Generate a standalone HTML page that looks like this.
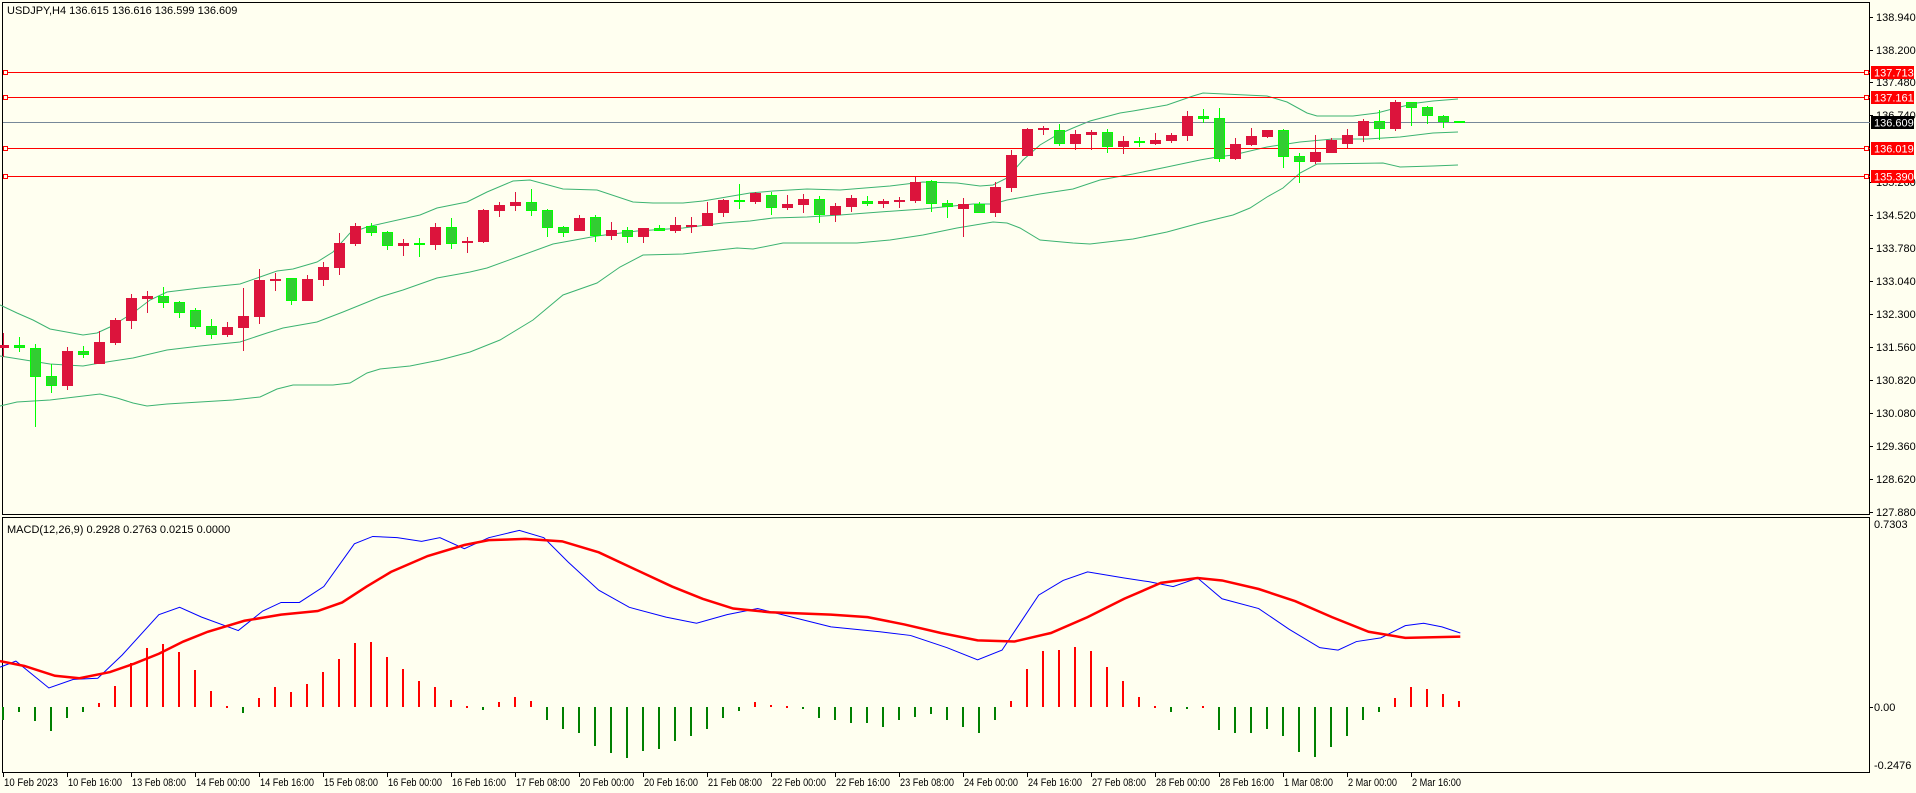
<!DOCTYPE html>
<html><head><meta charset="utf-8"><style>
html,body{margin:0;padding:0;background:#fffff0;}
svg{display:block;}
text{font-family:"Liberation Sans",sans-serif;font-size:11px;fill:#000;}
</style></head><body>
<svg id="s" width="1916" height="793" xmlns="http://www.w3.org/2000/svg" shape-rendering="crispEdges">
<rect width="1916" height="793" fill="#fffff0"/>
<rect x="2.5" y="2.5" width="1867" height="512" fill="none" stroke="#000"/>
<rect x="2.5" y="517.5" width="1867" height="255" fill="none" stroke="#000"/>
<text x="7" y="14">USDJPY,H4  136.615 136.616 136.599 136.609</text>
<text x="7" y="533">MACD(12,26,9) 0.2928 0.2763 0.0215 0.0000</text>
<g id="pax"></g>
<g fill="none" stroke="#3cb371" stroke-width="1" shape-rendering="auto">
<polyline points="0,305 17,313 33,320 50,329 83,335 97,333 110,327 133,313 150,300 167,292 200,288 240,284 260,277 277,271 293,269 317,262 333,252 350,233 367,227 380,224 420,215 437,208 467,202 487,192 513,181 530,180 563,189 597,190 633,202 653,203 683,203 703,201 750,193 773,191 807,189 840,190 890,186 923,182 957,183 980,186 993,185 1007,178 1023,160 1040,145 1057,135 1073,128 1090,121 1120,113 1133,111 1167,105 1193,96 1203,93 1267,96 1287,102 1307,113 1317,116 1353,116 1377,113 1400,107 1417,103 1433,101 1458,99"/>
<polyline points="0,356 50,364 83,366 100,363 133,358 167,350 200,346 240,342 267,333 283,328 317,322 343,312 380,297 403,290 437,278 470,272 487,268 520,256 553,244 597,236 637,231 683,228 723,223 750,221 773,218 807,217 840,215 880,212 923,209 973,204 993,204 1007,200 1040,194 1073,189 1100,180 1133,174 1167,167 1200,160 1217,157 1233,155 1267,147 1300,142 1333,139 1367,139 1400,137 1433,133 1458,132"/>
<polyline points="0,406 17,402 50,400 100,394 117,398 133,403 147,406 167,404 200,402 233,400 260,397 277,389 293,385 333,385 350,383 367,373 380,369 410,366 440,360 470,352 500,340 533,320 563,295 597,283 620,267 643,255 683,254 737,248 753,249 783,243 857,243 890,240 923,235 957,228 993,222 1007,223 1020,228 1040,240 1073,243 1090,244 1133,239 1167,232 1200,223 1233,215 1250,208 1267,197 1283,188 1300,173 1317,164 1383,163 1400,167 1433,166 1458,165"/>
</g>
<line x1="3" y1="122.5" x2="1870" y2="122.5" stroke="#778899"/>
<g stroke="#ff0000" fill="#fffff0">
<line x1="3" y1="72.5" x2="1870" y2="72.5"/>
<line x1="3" y1="97.5" x2="1870" y2="97.5"/>
<line x1="3" y1="148.5" x2="1870" y2="148.5"/>
<line x1="3" y1="176.5" x2="1870" y2="176.5"/>
<rect x="3.5" y="70.5" width="4" height="4"/><rect x="1864.5" y="70.5" width="4" height="4"/>
<rect x="3.5" y="95.5" width="4" height="4"/><rect x="1864.5" y="95.5" width="4" height="4"/>
<rect x="3.5" y="146.5" width="4" height="4"/><rect x="1864.5" y="146.5" width="4" height="4"/>
<rect x="3.5" y="174.5" width="4" height="4"/><rect x="1864.5" y="174.5" width="4" height="4"/>
</g>
<g id="cdl"></g>
<g id="hist"></g>
<g transform="scale(1.222)" fill="none" shape-rendering="auto">
<polyline vector-effect="non-scaling-stroke" stroke="#0000ff" stroke-width="1" points="0,546 13,541 40,563 60,556 80,555 100,536 130,503 147,497 165,505 195,516 215,500 230,493 245,493 265,480 290,445 305,439 325,440 345,443 360,440 380,449 400,440 425,434 445,440 465,460 490,483 515,497 545,505 570,510 595,503 620,498 640,503 660,508 680,513 720,517 745,520 775,530 800,540 820,532 850,487 870,475 890,468 920,473 940,476 960,480 980,473 1000,490 1030,498 1055,515 1080,530 1095,532 1110,525 1130,522 1150,512 1165,510 1180,513 1195,518"/>
<polyline vector-effect="non-scaling-stroke" stroke="#ff0000" stroke-width="2.5" points="0,541 20,545 45,553 65,555 90,550 110,543 130,535 150,525 170,517 200,508 230,503 260,500 280,493 300,480 320,468 350,455 380,446 400,442 430,441 460,443 490,452 520,466 550,480 575,490 600,498 630,501 680,503 710,505 740,511 770,518 800,524 830,525 860,518 890,505 920,490 950,477 980,473 1000,475 1030,482 1060,492 1090,505 1120,517 1150,522 1195,521"/>
</g>
<g>
<rect x="1871" y="66" width="43" height="13" fill="#ff0000"/><text x="1874" y="76.5" style="fill:#fff">137.713</text>
<rect x="1871" y="91" width="43" height="13" fill="#ff0000"/><text x="1874" y="101.5" style="fill:#fff">137.161</text>
<rect x="1871" y="116" width="43" height="13" fill="#000"/><text x="1874" y="126.5" style="fill:#fff">136.609</text>
<rect x="1871" y="142" width="43" height="13" fill="#ff0000"/><text x="1874" y="152.5" style="fill:#fff">136.019</text>
<rect x="1871" y="170" width="43" height="13" fill="#ff0000"/><text x="1874" y="180.5" style="fill:#fff">135.390</text>
</g>
<text x="1874" y="528">0.7303</text>
<line x1="1870" y1="707.5" x2="1873" y2="707.5" stroke="#000"/>
<text x="1874" y="711">0.00</text>
<text x="1874" y="769">-0.2476</text>
<g id="dates"></g>
</svg>
<script>
var NS="http://www.w3.org/2000/svg";
function el(p,t,a,txt){var e=document.createElementNS(NS,t);for(var k in a)e.setAttribute(k,a[k]);if(txt)e.textContent=txt;p.appendChild(e);return e;}
var pax=document.getElementById('pax');
var pl=[["138.940",17],["138.200",50],["137.480",82],["136.740",115],["135.260",182],["134.520",215],["133.780",248],["133.040",281],["132.300",314],["131.560",347],["130.820",380],["130.080",413],["129.360",446],["128.620",479],["127.880",512]];
pl.forEach(function(p){el(pax,'line',{x1:1870,y1:p[1]+.5,x2:1873,y2:p[1]+.5,stroke:'#000'});el(pax,'text',{x:1876,y:p[1]+4},p[0]);});
var C=[
['r',345,348,333,357],['g',345,348,337,352],['g',348,377,344,427],['g',376,386,364,393],['r',351,386,347,390],['g',351,355,346,358],['r',342,364,331,364],['r',320,343,318,345],['r',298,321,294,329],['r',296,299,291,313],
['g',296,303,287,308],['g',302,313,301,318],['g',310,327,308,329],['g',326,335,319,339],['r',327,335,322,337],['r',316,328,288,351],['r',280,317,269,324],['r',279,281,273,291],['g',278,301,278,305],['r',279,301,275,301],
['r',267,280,262,286],['r',243,268,233,275],['r',226,244,223,246],['g',226,233,223,236],['g',232,246,231,250],['r',243,246,239,256],['g',243,245,238,257],['r',227,245,223,250],['g',227,244,218,249],['r',241,243,237,253],
['r',210,242,209,243],['r',205,211,202,217],['r',202,206,192,211],['g',202,211,189,216],['g',210,228,209,237],['g',227,233,226,237],['r',218,231,215,231],['g',217,236,215,242],['r',230,236,222,240],['g',230,237,227,243],
['r',228,237,228,243],['g',228,231,225,231],['r',225,231,217,233],['r',225,226,217,233],['r',213,226,202,226],['r',200,213,199,217],['g',200,202,184,209],['r',193,202,192,204],['g',195,208,192,215],['r',204,208,195,210],
['r',199,205,194,213],['g',199,215,196,223],['r',206,215,203,222],['r',198,207,195,212],['g',201,204,196,206],['r',201,204,199,208],['r',200,202,197,208],['r',182,201,177,203],['g',181,204,180,212],['g',203,207,200,218],
['r',204,209,198,237],['g',204,213,202,213],['r',187,213,182,217],['r',155,188,150,192],['r',129,156,128,156],['r',128,130,126,135],['g',130,144,124,146],['r',134,144,130,150],['r',132,135,130,150],['g',132,147,129,153],
['r',141,147,136,154],['g',141,143,137,147],['r',140,144,133,145],['r',135,141,133,143],['r',116,136,111,141],['g',116,119,109,123],['g',118,159,108,162],['r',144,159,138,160],['r',136,145,128,146],['r',130,137,130,138],
['g',130,157,129,168],['g',156,162,153,183],['r',152,162,135,164],['r',140,153,138,153],['r',135,144,129,148],['r',121,136,119,142],['g',121,129,110,140],['r',102,129,100,131],['g',102,108,102,126],['g',107,116,106,124],
['g',116,122,115,128],['g',121,123,121,123]];
var cg=document.getElementById('cdl');
C.forEach(function(c,i){var x=3+16*i;var red=c[0]=='r';var col=red?'#dc143c':'#00ff00';
 el(cg,'rect',{x:x,y:c[3],width:1,height:Math.max(1,c[4]-c[3]),fill:col});
 var h=Math.max(2,c[2]-c[1]);
 if(red) el(cg,'rect',{x:x-5,y:c[1],width:11,height:h,fill:'#dc143c'});
 else el(cg,'rect',{x:x-4.5,y:c[1]+.5,width:10,height:h-1,fill:'#32cd32',stroke:'#00ff00'});
});
var H=[720,712,721,731,718,712,703,686,663,648,644,652,670,691,706,713,698,687,692,684,672,659,643,642,657,669,681,687,700,706,710,702,697,701,720,729,733,746,753,758,751,749,741,736,729,718,711,702,705,706,708,718,720,723,723,727,720,717,714,720,727,733,720,701,669,651,650,647,651,667,681,697,706,712,708,706,730,733,733,729,736,752,757,747,736,720,712,698,687,689,694,701];
var G={0:1,1:1,2:1,3:1,4:1,5:1,15:1,30:1};
var hg=document.getElementById('hist');
H.forEach(function(v,i){var x=3+16*i;var g=v>707||G[i];var col=g?'#008000':'#ff0000';
 var y1=Math.min(707,v),y2=Math.max(707,v);if(y2-y1<2){y2=y1+2;}
 el(hg,'rect',{x:x-1,y:y1,width:2,height:y2-y1,fill:col});});
var D=["10 Feb 2023","10 Feb 16:00","13 Feb 08:00","14 Feb 00:00","14 Feb 16:00","15 Feb 08:00","16 Feb 00:00","16 Feb 16:00","17 Feb 08:00","20 Feb 00:00","20 Feb 16:00","21 Feb 08:00","22 Feb 00:00","22 Feb 16:00","23 Feb 08:00","24 Feb 00:00","24 Feb 16:00","27 Feb 08:00","28 Feb 00:00","28 Feb 16:00","1 Mar 08:00","2 Mar 00:00","2 Mar 16:00"];
var dg=document.getElementById('dates');
D.forEach(function(d,i){var x=3+64*i;el(dg,'rect',{x:x,y:773,width:1,height:4,fill:'#000'});
 var w=d.length<12?(d.length==11&&d.indexOf('Mar')>0?49:54):54;
 el(dg,'text',{x:x+1,y:786,'font-size':'10.5','textLength':w,'lengthAdjust':'spacingAndGlyphs'},d);});
</script>
</body></html>
